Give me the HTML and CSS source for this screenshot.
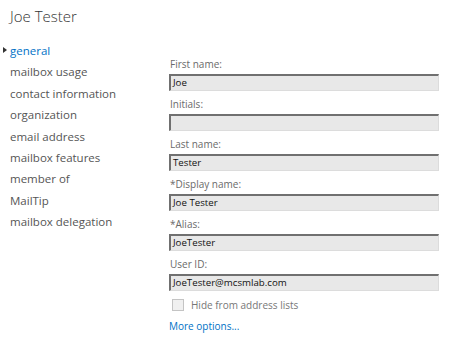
FILE: index.html
```html
<!DOCTYPE html>
<html>
<head>
<meta charset="utf-8">
<link rel="stylesheet" href="styles.css">
</head>
<body>
<div class="page">
  <h1 class="title">Joe Tester</h1>
  <div class="main">
    <ul class="nav">
      <li class="nav-item active"><span class="caret"></span>general</li>
      <li class="nav-item">mailbox usage</li>
      <li class="nav-item">contact information</li>
      <li class="nav-item">organization</li>
      <li class="nav-item">email address</li>
      <li class="nav-item">mailbox features</li>
      <li class="nav-item">member of</li>
      <li class="nav-item">MailTip</li>
      <li class="nav-item">mailbox delegation</li>
    </ul>
    <div class="form">
      <div class="field"><div class="label">First name:</div><div class="input">Joe</div></div>
      <div class="field"><div class="label">Initials:</div><div class="input"></div></div>
      <div class="field"><div class="label">Last name:</div><div class="input">Tester</div></div>
      <div class="field"><div class="label">*Display name:</div><div class="input">Joe Tester</div></div>
      <div class="field"><div class="label">*Alias:</div><div class="input">JoeTester</div></div>
      <div class="field"><div class="label">User ID:</div><div class="input">JoeTester@mcsmlab.com</div></div>
      <div class="check-row"><span class="checkbox"></span><span class="check-label">Hide from address lists</span></div>
      <div class="more">More options...</div>
    </div>
  </div>
</div>
</body>
</html>
```
FILE: styles.css
```css
* { box-sizing: border-box; }
html, body { margin: 0; padding: 0; background: #fff; }
body { font-family: "Open Sans", "Noto Sans", sans-serif; color: #333; }
.page { width: 458px; height: 342px; overflow: hidden; }
.title {
  margin: 0;
  padding: 5px 0 0 10px;
  height: 40px;
  font-size: 15px;
  font-weight: 300;
  line-height: 22px;
  color: #333;
}
.main { display: grid; grid-template-columns: 169px 270px; }
.nav { list-style: none; margin: 0; padding: 0 0 0 10px; }
.nav-item {
  position: relative;
  font-size: 11.5px;
  line-height: 21.4px;
  color: #555;
  white-space: nowrap;
}
.nav-item.active { color: #0072c6; }
.caret {
  position: absolute;
  left: -7px;
  top: 7px;
  width: 0; height: 0;
  border-top: 3.5px solid transparent;
  border-bottom: 3.5px solid transparent;
  border-left: 4px solid #333;
}
.form { padding-top: 16px; }
.field { height: 40px; }
.label {
  font-size: 10px;
  line-height: 16px;
  color: #6a6a6a;
  padding-left: 1px;
  margin-bottom: 2px;
}
.input {
  height: 17px;
  background: #e8e8e8;
  border-top: 2px solid #707070;
  border-left: 2px solid #707070;
  border-right: 1px solid #dcdcdc;
  border-bottom: 1px solid #dcdcdc;
  font-size: 9.7px;
  line-height: 14px;
  padding-left: 2px;
  color: #111;
}
.check-row { display: flex; align-items: center; height: 16px; margin-top: 1px; padding-left: 3px; }
.checkbox {
  width: 12px; height: 12px;
  border: 1px solid #c4c4c4;
  background: #f0f0f0;
  margin-right: 7px;
}
.check-label { font-size: 10px; color: #777; }
.more { margin-top: 5px; font-size: 10px; line-height: 16px; color: #0072c6; }
```
